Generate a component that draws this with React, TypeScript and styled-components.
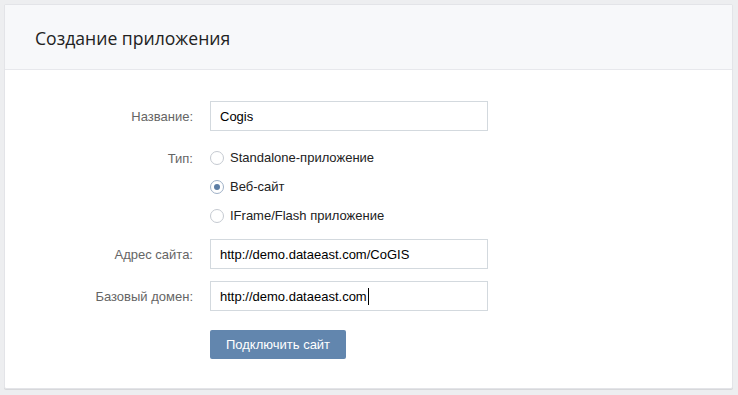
import React from "react";
import styled, { createGlobalStyle } from "styled-components";

const GlobalStyle = createGlobalStyle`
  html, body {
    margin: 0;
    padding: 0;
    background: #edeef0;
  }
  body {
    font-family: "Liberation Sans", Arial, sans-serif;
  }
`;

type Option = {
  id: string;
  label: string;
};

const options: Option[] = [
  { id: "standalone", label: "Standalone-приложение" },
  { id: "site", label: "Веб-сайт" },
  { id: "iframe", label: "IFrame/Flash приложение" },
];

export default function App() {
  const [name, setName] = React.useState("Cogis");
  const [type, setType] = React.useState("site");
  const [address, setAddress] = React.useState(
    "http://demo.dataeast.com/CoGIS"
  );
  const [domain, setDomain] = React.useState("http://demo.dataeast.com");

  return (
    <>
      <GlobalStyle />
      <Page>
        <Card>
          <Header>
            <h1>Создание приложения</h1>
          </Header>
          <Form>
            <Label>Название:</Label>
            <Input value={name} onChange={(e) => setName(e.target.value)} />

            <Label $top>Тип:</Label>
            <RadioGroup>
              {options.map((opt) => (
                <RadioRow key={opt.id} onClick={() => setType(opt.id)}>
                  <RadioCircle $checked={type === opt.id} />
                  <span>{opt.label}</span>
                </RadioRow>
              ))}
            </RadioGroup>

            <Label>Адрес сайта:</Label>
            <Input
              value={address}
              onChange={(e) => setAddress(e.target.value)}
            />

            <Label>Базовый домен:</Label>
            <FakeInput>
              {domain}
              <Caret />
            </FakeInput>

            <span />
            <ButtonCell>
              <Button onClick={() => setDomain(domain)}>Подключить сайт</Button>
            </ButtonCell>
          </Form>
        </Card>
      </Page>
    </>
  );
}

const Page = styled.div`
  padding: 4px 5px 6px 4px;
`;

const Card = styled.div`
  width: 727px;
  background: #ffffff;
  border: 1px solid #e3e4e8;
  border-radius: 2px;
  box-shadow: 0 1px 0 0 #d7d8db;
  overflow: hidden;
`;

const Header = styled.div`
  height: 64px;
  display: flex;
  align-items: center;
  padding: 0 30px;
  background: #f7f8fa;
  border-bottom: 1px solid #e7e8ec;

  h1 {
    margin: 0;
    margin-top: 2px;
    font-family: "Open Sans", "Noto Sans", sans-serif;
    font-weight: 400;
    font-size: 17.6px;
    color: #222222;
  }
`;

const Form = styled.div`
  display: grid;
  grid-template-columns: 188px 278px;
  column-gap: 17px;
  row-gap: 12px;
  padding: 31px 0 29px 0;
  font-size: 13px;
`;

const Label = styled.div<{ $top?: boolean }>`
  display: flex;
  justify-content: flex-end;
  align-items: ${(p) => (p.$top ? "flex-start" : "center")};
  padding-top: ${(p) => (p.$top ? "8px" : "0")};
  color: #656565;
  white-space: nowrap;
`;

const Input = styled.input`
  box-sizing: border-box;
  height: 30px;
  width: 278px;
  padding: 0 9px;
  border: 1px solid #d3d9de;
  border-radius: 0;
  font-family: "Liberation Sans", Arial, sans-serif;
  font-size: 13px;
  color: #000000;
  outline: none;
`;

const FakeInput = styled.div`
  box-sizing: border-box;
  height: 30px;
  width: 278px;
  padding: 0 9px;
  border: 1px solid #d3d9de;
  display: flex;
  align-items: center;
  color: #000000;
`;

const Caret = styled.span`
  display: inline-block;
  width: 1px;
  height: 17px;
  background: #000000;
  margin-left: 1px;
`;

const RadioGroup = styled.div`
  display: flex;
  flex-direction: column;
  margin-bottom: -3px;
`;

const RadioRow = styled.label`
  height: 29px;
  display: flex;
  align-items: center;
  gap: 6px;
  color: #222222;
  cursor: pointer;
`;

const RadioCircle = styled.span<{ $checked: boolean }>`
  box-sizing: border-box;
  width: 14px;
  height: 14px;
  border-radius: 50%;
  border: 1px solid ${(p) => (p.$checked ? "#9fb1c7" : "#c5cad1")};
  background: #ffffff;
  display: flex;
  align-items: center;
  justify-content: center;

  &::after {
    content: "";
    display: ${(p) => (p.$checked ? "block" : "none")};
    width: 6px;
    height: 6px;
    border-radius: 50%;
    background: #5c7da4;
  }
`;

const ButtonCell = styled.div`
  padding-top: 7px;
`;

const Button = styled.button`
  height: 29px;
  padding: 0 16px;
  border: none;
  border-radius: 2px;
  background: #6286ae;
  color: #ffffff;
  font-family: "Liberation Sans", Arial, sans-serif;
  font-size: 13px;
  cursor: pointer;
`;
